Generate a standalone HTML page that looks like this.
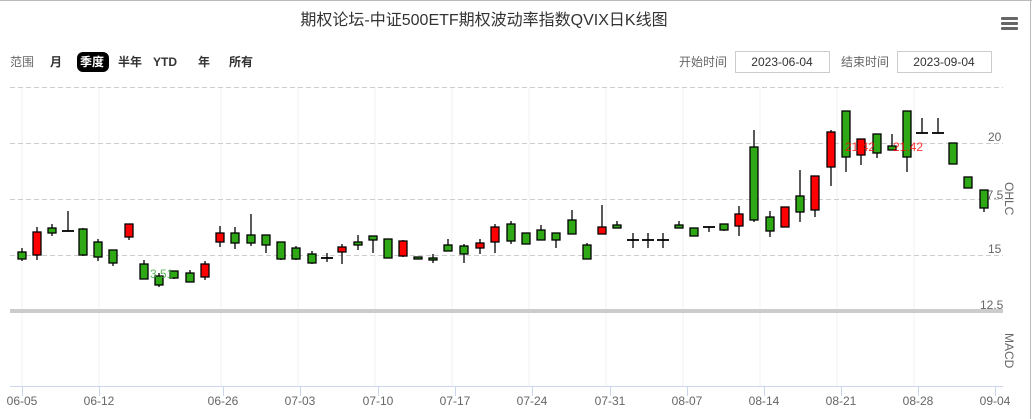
<!DOCTYPE html>
<html><head><meta charset="utf-8"><style>
body{margin:0;width:1032px;height:419px;overflow:hidden;background:#fff;font-family:"Liberation Sans","Noto Sans CJK SC",sans-serif;}
svg{position:absolute;left:0;top:0}
</style></head><body>
<svg width="1032" height="419" xmlns="http://www.w3.org/2000/svg" font-family="Liberation Sans, Noto Sans CJK SC, sans-serif">
<line x1="0" y1="0.5" x2="1032" y2="0.5" stroke="#bbb"/>
<line x1="1030.5" y1="0" x2="1030.5" y2="419" stroke="#bbb"/>
<text x="484" y="25" text-anchor="middle" font-size="16" fill="#333">期权论坛-中证500ETF期权波动率指数QVIX日K线图</text>
<g fill="#666"><rect x="1001" y="17" width="17" height="3" rx="1"/><rect x="1001" y="22" width="17" height="3" rx="1"/><rect x="1001" y="27" width="17" height="3" rx="1"/></g>
<g font-size="12"><text x="10" y="66" fill="#666">范围</text>
<g font-weight="bold" fill="#333"><text x="50" y="66">月</text><rect x="77" y="52" width="32" height="20" rx="6" fill="#000"/><text x="80" y="66" fill="#fff">季度</text><text x="118" y="66">半年</text><text x="153" y="66">YTD</text><text x="198" y="66">年</text><text x="229" y="66">所有</text></g>
<text x="679" y="66" fill="#666">开始时间</text><rect x="735.5" y="51.5" width="94" height="21" fill="#fff" stroke="#ccc"/><text x="782" y="66" text-anchor="middle" fill="#333">2023-06-04</text>
<text x="841" y="66" fill="#666">结束时间</text><rect x="897.5" y="51.5" width="94" height="21" fill="#fff" stroke="#ccc"/><text x="944" y="66" text-anchor="middle" fill="#333">2023-09-04</text></g>
<g stroke="#f0f0f0"><line x1="22" y1="87" x2="22" y2="386"/><line x1="99" y1="87" x2="99" y2="386"/><line x1="221" y1="87" x2="221" y2="386"/><line x1="298" y1="87" x2="298" y2="386"/><line x1="375" y1="87" x2="375" y2="386"/><line x1="452" y1="87" x2="452" y2="386"/><line x1="529" y1="87" x2="529" y2="386"/><line x1="606" y1="87" x2="606" y2="386"/><line x1="683" y1="87" x2="683" y2="386"/><line x1="760" y1="87" x2="760" y2="386"/><line x1="837" y1="87" x2="837" y2="386"/><line x1="914" y1="87" x2="914" y2="386"/></g>
<g stroke="#ccc" stroke-dasharray="5,3"><line x1="10" y1="87.5" x2="1003" y2="87.5"/><line x1="10" y1="143.5" x2="1003" y2="143.5"/><line x1="10" y1="199.5" x2="1003" y2="199.5"/><line x1="10" y1="255.5" x2="1003" y2="255.5"/></g>
<rect x="10" y="309" width="993" height="4" fill="#ccc"/>
<g font-size="12" fill="#666"><text x="988" y="141">20</text><text x="980" y="199">17.5</text><text x="988" y="253">15</text><text x="980" y="309">12.5</text>
<text transform="translate(1005,182) rotate(90)">OHLC</text><text transform="translate(1005,333) rotate(90)">MACD</text></g>
<line x1="10" y1="386.5" x2="1003" y2="386.5" stroke="#ccd6eb"/>
<g stroke="#ccd6eb"><line x1="22.5" y1="386" x2="22.5" y2="396"/><line x1="99.5" y1="386" x2="99.5" y2="396"/><line x1="223.5" y1="386" x2="223.5" y2="396"/><line x1="300.5" y1="386" x2="300.5" y2="396"/><line x1="378.5" y1="386" x2="378.5" y2="396"/><line x1="455.5" y1="386" x2="455.5" y2="396"/><line x1="532.5" y1="386" x2="532.5" y2="396"/><line x1="610.5" y1="386" x2="610.5" y2="396"/><line x1="687.5" y1="386" x2="687.5" y2="396"/><line x1="764.5" y1="386" x2="764.5" y2="396"/><line x1="841.5" y1="386" x2="841.5" y2="396"/><line x1="918.5" y1="386" x2="918.5" y2="396"/><line x1="995.5" y1="386" x2="995.5" y2="396"/></g>
<g font-size="12" fill="#666" text-anchor="middle"><text x="22" y="405">06-05</text><text x="99" y="405">06-12</text><text x="223" y="405">06-26</text><text x="300" y="405">07-03</text><text x="378" y="405">07-10</text><text x="455" y="405">07-17</text><text x="532" y="405">07-24</text><text x="610" y="405">07-31</text><text x="687" y="405">08-07</text><text x="764" y="405">08-14</text><text x="841" y="405">08-21</text><text x="918" y="405">08-28</text><text x="995" y="405">09-04</text></g>
<g id="c" stroke="#000" stroke-width="1.3"></g>
<text x="150" y="278" font-size="12" fill="#2fa82f" opacity="0.8">3.51</text>
<text x="845" y="151" font-size="12" fill="#f00" opacity="0.8">21.42</text>
<text x="893" y="151" font-size="12" fill="#f00" opacity="0.8">21.42</text>
</svg>
<script>
var d=[[22,252,259,248,261,'g'],[37,232,255,227,260,'r'],[52,228,233,224,236,'g'],[68,231,231,211,231,'d'],[83,229,255,228,256,'g'],[98,242,257,239,261,'g'],[113,250,263,250,266,'g'],[129,224,237,224,240,'r'],[144,264,279,260,279,'g'],[159,276,285,273,287,'g'],[174,271,278,271,279,'g'],[190,273,282,270,282,'g'],[205,264,277,261,280,'r'],[220,233,242,226,247,'r'],[235,233,243,227,249,'g'],[251,235,243,214,246,'g'],[266,235,245,235,253,'g'],[281,242,259,242,260,'g'],[296,248,259,246,260,'g'],[312,254,263,251,264,'g'],[327,258,258,253,262,'d'],[342,247,252,244,264,'r'],
[358,242,245,235,250,'g'],[373,236,240,236,253,'g'],[388,239,258,239,258,'g'],[403,241,256,240,257,'r'],[418,257,259,257,259,'g'],[433,258,260,254,263,'g'],[448,245,251,239,251,'g'],[464,246,254,244,263,'g'],[480,243,248,239,254,'r'],[495,227,242,224,253,'r'],[511,224,241,221,244,'g'],[526,233,244,233,244,'g'],[541,230,240,225,240,'g'],[556,233,240,233,248,'g'],[572,220,234,210,234,'g'],[587,245,259,243,259,'g'],[602,227,234,205,234,'r'],[617,225,228,221,228,'g'],[633,240,240,233,248,'d'],[648,240,240,233,248,'d'],[663,240,240,233,248,'d'],[679,225,228,221,228,'g'],[694,228,236,228,236,'g'],
[709,227,227,227,232,'d'],[724,224,230,224,231,'g'],[739,214,226,206,236,'r'],[754,147,220,130,222,'g'],[770,217,231,211,237,'g'],[785,207,227,207,227,'r'],[800,196,212,170,222,'g'],[815,176,210,176,217,'r'],[831,132,167,130,186,'r'],[846,111,157,111,172,'g'],[861,139,155,139,165,'r'],[877,134,153,134,158,'g'],[892,146,150,134,150,'g'],[907,111,157,111,172,'g'],[922,133,133,118,133,'d'],[938,133,133,118,133,'d'],[953,143,164,143,164,'g'],[968,177,188,177,188,'g'],[984,190,208,190,212,'g']];
var g=document.getElementById('c'),s='';
d.forEach(function(c){var x=c[0];
s+='<line x1="'+x+'" y1="'+c[3]+'" x2="'+x+'" y2="'+c[4]+'"/>';
if(c[5]=='d'){s+='<line x1="'+(x-6)+'" y1="'+c[1]+'" x2="'+(x+6)+'" y2="'+c[1]+'" stroke-width="1.8"/>';}
else{var h=Math.max(c[2]-c[1],2);s+='<rect x="'+(x-4)+'" y="'+c[1]+'" width="8" height="'+h+'" fill="'+(c[5]=='r'?'#ff0000':'#2fa816')+'"/>';}
});
g.innerHTML=s;
</script>
</body></html>
